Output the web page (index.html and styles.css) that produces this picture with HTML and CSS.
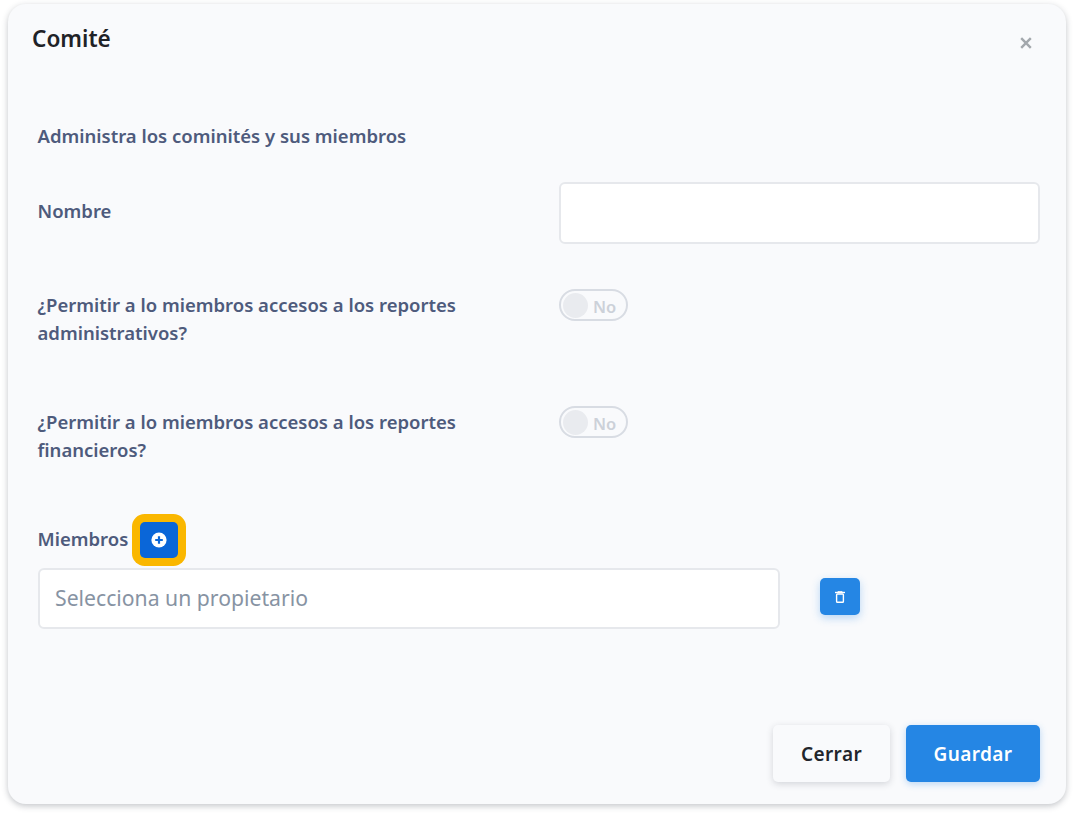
FILE: index.html
```html
<!DOCTYPE html>
<html lang="es">
<head>
<meta charset="utf-8">
<title>Comité</title>
<link rel="stylesheet" href="styles.css">
</head>
<body>
<div class="modal">
  <header class="head">
    <h1 class="title">Comité</h1>
    <svg class="close" width="12" height="12" viewBox="0 0 12 12"><path d="M1.2 1.2 10.8 10.8M10.8 1.2 1.2 10.8" stroke="#a3a8ad" stroke-width="2.4" fill="none"/></svg>
  </header>
  <div class="body">
    <p class="intro">Administra los cominités y sus miembros</p>
    <div class="row row-name">
      <label class="label label-name">Nombre</label>
      <input class="input name-input" type="text">
    </div>
    <div class="row row-toggle">
      <label class="label wrap">¿Permitir a lo miembros accesos a los reportes administrativos?</label>
      <div class="toggle"><span class="knob"></span><span class="toggle-text">No</span></div>
    </div>
    <div class="row row-toggle">
      <label class="label wrap">¿Permitir a lo miembros accesos a los reportes financieros?</label>
      <div class="toggle"><span class="knob"></span><span class="toggle-text">No</span></div>
    </div>
    <div class="members-head">
      <label class="label label-members">Miembros</label>
      <button class="add" type="button">
        <svg width="16" height="16" viewBox="0 0 16 16"><circle cx="8" cy="8" r="7.6" fill="#fff"/><path d="M8 4.2v7.6M4.2 8h7.6" stroke="#0a66d8" stroke-width="2.2"/></svg>
      </button>
    </div>
    <div class="member">
      <input class="input owner" type="text" placeholder="Selecciona un propietario">
      <button class="trash" type="button">
        <svg width="10" height="12" viewBox="0 0 10 12"><path d="M0 1.5h10" stroke="#fff" stroke-width="1.4"/><path d="M3 1V.4h4V1" stroke="#fff" stroke-width="1"/><rect x="1.6" y="3" width="6.8" height="8.2" rx=".8" fill="none" stroke="#fff" stroke-width="1.4"/></svg>
      </button>
    </div>
  </div>
  <footer class="foot">
    <button class="btn btn-light" type="button">Cerrar</button>
    <button class="btn btn-primary" type="button">Guardar</button>
  </footer>
</div>
</body>
</html>
```
FILE: styles.css
```css
* { box-sizing: border-box; }
html, body { margin: 0; height: 100%; background: #fff; }
body { font-family: "Noto Sans", "Open Sans", sans-serif; padding: 4px 8px 12px; overflow: hidden; }
.modal {
  height: 800px;
  background: #f9fafc;
  border-radius: 18px;
  box-shadow: 0 2px 6px rgba(40, 45, 60, .28);
  display: flex;
  flex-direction: column;
  padding: 0 26px 22px 30px;
}
.head { display: flex; justify-content: space-between; align-items: flex-start; height: 100px; padding-top: 20px; }
.title { margin: 0 0 0 -6px; font-size: 22.6px; line-height: 30px; font-weight: 600; color: #1f2227; }
.close { margin-top: 13px; margin-right: 8px; }
.body { flex: 1; }
.intro { margin: 19px 0 0 -.5px; font-size: 18.5px; line-height: 26px; font-weight: 600; color: #4e5b7c; }
.label { font-size: 18.5px; line-height: 28px; font-weight: 600; color: #4e5b7c; margin-left: -.5px; }
.label-name { margin-bottom: 4px; }
.label-members { margin-bottom: 2px; }
.wrap { width: 440px; margin-top: 2px; }
.row { display: flex; justify-content: flex-start; }
.row-name { margin-top: 33px; align-items: center; justify-content: space-between; }
.row-toggle { min-height: 58px; gap: 81.5px; }
.row-name + .row-toggle { margin-top: 45px; }
.row-toggle + .row-toggle { margin-top: 59px; }
.input {
  background: #fff;
  border: 2px solid #e6e8ec;
  border-radius: 6px;
  font-family: inherit;
  outline: none;
}
.name-input { width: 481px; height: 62px; }
.toggle {
  width: 69px;
  height: 32px;
  border: 2px solid #d8dce3;
  border-radius: 16px;
  display: flex;
  align-items: center;
  padding-left: 2px;
}
.knob { width: 25px; height: 25px; border-radius: 50%; background: #e9ebef; }
.toggle-text { margin-left: 5px; font-size: 16.5px; font-weight: 600; color: #ccd1d9; line-height: 22px; margin-top: 3px; }
.members-head { display: flex; align-items: center; gap: 12px; margin-top: 58px; height: 36px; }
.add {
  width: 38px;
  height: 36px;
  padding: 0;
  border: 0;
  background: #0a66d8;
  box-shadow: 0 0 0 8px #fab700;
  border-radius: 5px;
  display: flex;
  align-items: center;
  justify-content: center;
}
.member { display: flex; align-items: flex-start; gap: 40.5px; margin-top: 10px; }
.owner { width: 741.5px; height: 61px; padding: 0 15px 2px; font-size: 21.2px; color: #333; }
.owner::placeholder { color: #8793a3; opacity: 1; }
.trash {
  width: 40px;
  height: 37px;
  margin-top: 10px;
  padding: 0;
  border: 0;
  border-radius: 5px;
  background: #2586e4;
  box-shadow: 0 3px 8px rgba(37, 134, 228, .3);
  display: flex;
  align-items: center;
  justify-content: center;
}
.foot { display: flex; justify-content: flex-end; gap: 16px; }
.btn {
  height: 57px;
  border: 0;
  border-radius: 5px;
  font-family: inherit;
  font-size: 19px;
  font-weight: 600;
  letter-spacing: .4px;
}
.btn-light { width: 117px; background: #f9fafc; color: #22252b; box-shadow: 0 2px 7px rgba(40, 45, 60, .18); }
.btn-primary { width: 134px; background: #2586e4; color: #fff; box-shadow: 0 2px 7px rgba(37, 134, 228, .3); }
```
